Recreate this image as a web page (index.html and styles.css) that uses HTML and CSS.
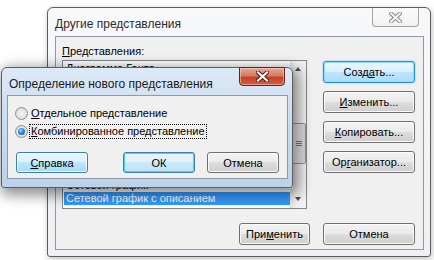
FILE: index.html
```html
<!DOCTYPE html>
<html lang="ru">
<head>
  <meta charset="UTF-8">
  <meta name="viewport" content="width=device-width, initial-scale=1.0">
  <title>Другие представления</title>
  <link rel="stylesheet" href="styles.css">
</head>
<body>
  <div class="desktop">

    <!-- Back window: list of views -->
    <div class="window window-back">
      <div class="titlebar">
        <span class="caption">Другие представления</span>
        <span class="close-btn close-inactive">
          <svg width="13" height="11" viewBox="0 0 13 11">
            <path d="M2 1.5 L11 9.5 M11 1.5 L2 9.5" stroke="#8a8a8a" stroke-width="4" stroke-linecap="square" fill="none"/>
            <path d="M2 1.5 L11 9.5 M11 1.5 L2 9.5" stroke="#f4f4f4" stroke-width="2" stroke-linecap="square" fill="none"/>
          </svg>
        </span>
      </div>
      <div class="client client-views">
        <div class="views-main">
          <div class="views-left">
            <div class="field-label"><u>П</u>редставления:</div>
            <div class="listbox">
              <ul class="list-items">
                <li>Диаграмма Ганта</li>
                <li class="list-tail">Сетевой график</li>
                <li class="selected">Сетевой график с описанием</li>
              </ul>
              <div class="scrollbar">
                <div class="scroll-arrow arrow-up"></div>
                <div class="scroll-track">
                  <div class="scroll-thumb"><span class="grip"></span></div>
                </div>
                <div class="scroll-arrow arrow-down"></div>
              </div>
            </div>
          </div>
          <div class="views-buttons">
            <button class="btn btn-default">Созд<u>а</u>ть...</button>
            <button class="btn"><u>И</u>зменить...</button>
            <button class="btn"><u>К</u>опировать...</button>
            <button class="btn">Ор<u>г</u>анизатор...</button>
          </div>
        </div>
        <div class="views-footer">
          <button class="btn btn-apply">При<u>м</u>енить</button>
          <button class="btn">Отмена</button>
        </div>
      </div>
    </div>

    <!-- Front window: new view definition -->
    <div class="window window-front">
      <div class="titlebar">
        <span class="caption">Определение нового представления</span>
        <span class="close-btn close-active">
          <svg width="13" height="11" viewBox="0 0 13 11">
            <path d="M2 1.5 L11 9.5 M11 1.5 L2 9.5" stroke="#4a1a12" stroke-width="4.2" stroke-linecap="square" fill="none"/>
            <path d="M2 1.5 L11 9.5 M11 1.5 L2 9.5" stroke="#ffffff" stroke-width="2.2" stroke-linecap="square" fill="none"/>
          </svg>
        </span>
      </div>
      <div class="client client-new">
        <div class="radio-row">
          <span class="radio"></span>
          <span class="radio-label"><u>О</u>тдельное представление</span>
        </div>
        <div class="radio-row">
          <span class="radio checked"></span>
          <span class="radio-label focused"><u>К</u>омбинированное представление</span>
        </div>
        <div class="new-footer">
          <button class="btn btn-hot"><u>С</u>правка</button>
          <div class="new-footer-right">
            <button class="btn btn-default-ok">ОК</button>
            <button class="btn">Отмена</button>
          </div>
        </div>
      </div>
    </div>

  </div>
</body>
</html>
```

FILE: styles.css
```css
body {
  margin: 0;
  padding: 0;
  background-color: #ffffff;
  font-family: "Liberation Sans", Arial, sans-serif;
  font-size: 11px;
  color: #000000;
}

.desktop {
  position: relative;
  width: 434px;
  height: 260px;
  overflow: hidden;
  background-color: #ffffff;
}

/* Window frames */
.window {
  position: absolute;
  box-sizing: border-box;
  display: flex;
  flex-direction: column;
  border: 1px solid #5e5e5e;
  border-radius: 6px 6px 3px 3px;
}

.window-back {
  left: 47px;
  top: 7px;
  width: 384px;
  height: 250px;
  padding: 0 6px 6px 7px;
  background: linear-gradient(180deg, #f7f8fa 0%, #eef0f3 100%);
  box-shadow: 1px 2px 6px rgba(0, 0, 0, 0.25);
}

.window-front {
  left: 1px;
  top: 67px;
  width: 292px;
  height: 121px;
  padding: 0 4px 8px 5px;
  background: linear-gradient(180deg, #dde9f6 0%, #cadcf0 45%, #bcd2ea 100%);
  box-shadow: 3px 4px 14px 3px rgba(0, 0, 0, 0.45);
  z-index: 2;
}

.titlebar {
  position: relative;
  display: flex;
  align-items: center;
  flex-shrink: 0;
}

.window-back .titlebar {
  height: 28px;
}

.window-front .titlebar {
  height: 27px;
  padding-left: 2px;
}

.caption {
  font-size: 12px;
  color: #1a1a1a;
  white-space: nowrap;
}

.window-back .caption {
  color: #2b2b2b;
  padding-top: 4px;
}

.window-front .caption {
  padding-top: 5px;
}

.close-btn {
  position: absolute;
  display: flex;
  align-items: center;
  justify-content: center;
  box-sizing: border-box;
  border-radius: 0 0 4px 4px;
}

.close-inactive {
  top: 0;
  right: 5px;
  width: 47px;
  height: 19px;
  border: 1px solid #a3a3a3;
  border-top: none;
  background: linear-gradient(180deg, #fbfbfb 0%, #f1f1f1 100%);
}

.close-active {
  top: -1px;
  right: 3px;
  width: 46px;
  height: 19px;
  border: 1px solid #6b2012;
  background: linear-gradient(180deg, #e8a897 0%, #d67a63 45%, #c2432a 55%, #d4603f 100%);
  box-shadow: inset 0 0 0 1px rgba(255, 220, 210, 0.5);
}

/* Client areas */
.client {
  box-sizing: border-box;
  flex: 1;
  border: 1px solid #8f9aa6;
  background-color: #f0f0f0;
}

.client-views {
  display: flex;
  flex-direction: column;
  padding: 7px 8px 4px 6px;
}

.views-main {
  display: flex;
  gap: 16px;
}

.views-left {
  width: 245px;
}

.field-label {
  line-height: 14px;
  height: 14px;
  white-space: nowrap;
}

.listbox {
  box-sizing: border-box;
  display: flex;
  height: 149px;
  margin-top: 2px;
  border: 1px solid #828790;
  background-color: #ffffff;
}

.list-items {
  flex: 1;
  display: flex;
  flex-direction: column;
  list-style: none;
  margin: 0;
  padding: 1px 0 3px 1px;
  overflow: hidden;
}

.list-items li {
  height: 13px;
  line-height: 13px;
  padding-left: 2px;
  white-space: nowrap;
}

.list-items li.list-tail {
  margin-top: auto;
}

.list-items li.selected {
  background-color: #3399ff;
  color: #ffffff;
}

.scrollbar {
  width: 16px;
  display: flex;
  flex-direction: column;
  background: linear-gradient(90deg, #e3e3e3 0%, #f2f2f2 40%, #f2f2f2 100%);
}

.scroll-arrow {
  height: 17px;
  position: relative;
}

.scroll-arrow::after {
  content: "";
  position: absolute;
  left: 5px;
  top: 6px;
  border-left: 3.5px solid transparent;
  border-right: 3.5px solid transparent;
}

.arrow-up::after {
  border-bottom: 4px solid #4d4d4d;
}

.arrow-down::after {
  border-top: 4px solid #4d4d4d;
}

.scroll-track {
  flex: 1;
  position: relative;
}

.scroll-thumb {
  position: absolute;
  left: 1px;
  right: 0;
  top: 45px;
  height: 41px;
  box-sizing: border-box;
  border: 1px solid #979797;
  border-radius: 2px;
  background: linear-gradient(90deg, #f3f3f3 0%, #e8e8e8 50%, #d8d8d8 100%);
  display: flex;
  align-items: center;
  justify-content: center;
}

.grip {
  width: 6px;
  height: 5px;
  background: repeating-linear-gradient(180deg, #7a7a7a 0, #7a7a7a 1px, transparent 1px, transparent 2px);
}

.views-buttons {
  width: 92px;
  padding-top: 17px;
  display: flex;
  flex-direction: column;
  gap: 8px;
}

.views-footer {
  display: flex;
  justify-content: flex-end;
  gap: 13px;
  margin-top: 14px;
}

/* Buttons */
.btn {
  box-sizing: border-box;
  width: 92px;
  height: 22px;
  padding: 0;
  font-family: inherit;
  font-size: 11px;
  color: #000000;
  border: 1px solid #707070;
  border-radius: 3px;
  background: linear-gradient(180deg, #f2f2f2 0%, #ebebeb 50%, #dddddd 50%, #cfcfcf 100%);
  box-shadow: inset 0 0 0 1px #fbfbfb;
}

.btn u {
  text-decoration-thickness: 1px;
}

.btn-apply {
  width: 71px;
}

.btn-default {
  border-color: #2a8fd6;
  background: linear-gradient(180deg, #eaf7fd 0%, #d9f0fc 50%, #bee6fd 50%, #a9dcf8 100%);
  box-shadow: inset 0 0 0 1px #94d8fb, 0 0 2px #6ec3f2;
}

.client-new {
  padding: 9px 8px 5px 7px;
  display: flex;
  flex-direction: column;
}

.radio-row {
  display: flex;
  align-items: center;
  height: 16px;
  gap: 1px;
}

.radio-row + .radio-row {
  margin-top: 2px;
}

.radio {
  box-sizing: border-box;
  width: 13px;
  height: 13px;
  border-radius: 50%;
  border: 1px solid #8e8f8f;
  background: radial-gradient(circle at 50% 50%, #f4f4f4 0%, #e2e2e2 60%, #d0d0d0 100%);
  position: relative;
  flex-shrink: 0;
}

.radio.checked::after {
  content: "";
  position: absolute;
  left: 2px;
  top: 2px;
  width: 7px;
  height: 7px;
  border-radius: 50%;
  background: radial-gradient(circle at 40% 35%, #9fd6ff 0%, #2f8ad8 45%, #0e4a8a 100%);
}

.radio-label {
  padding: 0 1px;
  line-height: 13px;
  border: 1px dotted transparent;
  white-space: nowrap;
}

.radio-label.focused {
  border-color: #000000;
}

.new-footer {
  display: flex;
  justify-content: space-between;
  margin-top: 13px;
  padding-left: 1px;
}

.new-footer-right {
  display: flex;
  gap: 12px;
}

.new-footer .btn {
  width: 72px;
  height: 21px;
}

.btn-hot {
  border-color: #3c7fb1;
  background: linear-gradient(180deg, #eaf6fd 0%, #d9f0fc 50%, #bee6fd 50%, #a7d9f5 100%);
  box-shadow: inset 0 0 0 1px #fcfdfe;
}

.btn-default-ok {
  border-color: #3c7fb1;
  background: linear-gradient(180deg, #eaf6fd 0%, #dff1fb 50%, #cbe8f8 50%, #c0e3f7 100%);
  box-shadow: inset 0 0 0 1px #48d2fb;
}
```
